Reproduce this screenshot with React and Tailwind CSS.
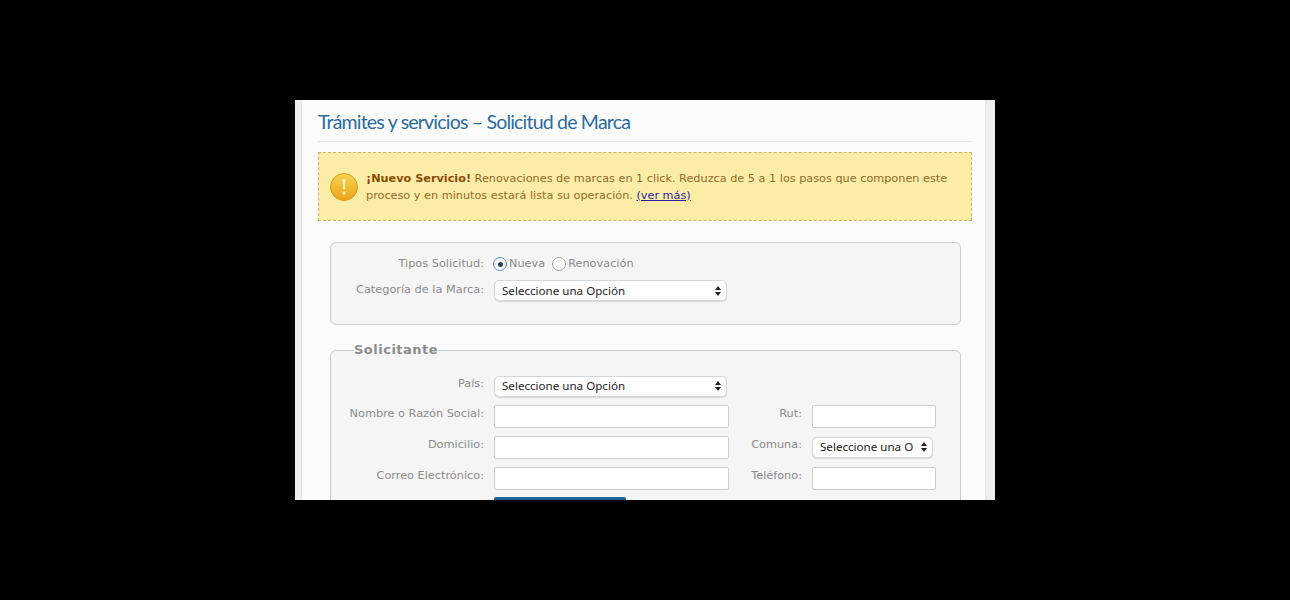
function Sel({ text, w }) {
  return (
    <div className={`${w} h-[21px] shrink-0 flex items-center justify-between bg-white border border-[#d4d8d8] rounded-[5px] pl-[7px] pr-[5px] text-[11.6px] text-[#222] font-['Noto_Sans',sans-serif] shadow-[0_1px_1px_rgba(0,0,0,0.12)]`}>
      <span className="whitespace-nowrap">{text}</span>
      <svg width="6" height="10" viewBox="0 0 6 10" className="shrink-0 ml-1"><path d="M3 0 6 4H0zM3 10 0 6h6z" fill="#222" /></svg>
    </div>
  );
}

function Inp({ w }) {
  return <div className={`${w} h-[23px] shrink-0 bg-white border border-[#c9d0ce] rounded-[2px]`} />;
}

function Label({ w, up, children }) {
  return <div className={`${w} ${up ? "pb-[4px]" : ""} shrink-0 text-right text-[11.3px] text-[#8b8b8b] whitespace-nowrap`}>{children}</div>;
}

function Radio({ on }) {
  return (
    <span className={`w-[14px] h-[14px] rounded-full bg-white border flex items-center justify-center ${on ? "border-[#5b8fc4]" : "border-[#a5a5a5]"}`}>
      {on && <span className="w-[5px] h-[5px] rounded-full bg-[#26425f]" />}
    </span>
  );
}

export default function App() {
  return (
    <div className="w-[1290px] h-[600px] bg-black pt-[100px] overflow-hidden font-['DejaVu_Sans',sans-serif]">
      <div className="ml-[295px] w-[700px] h-[400px] overflow-hidden bg-[#fcfcfc] flex">
        <div className="w-[7px] bg-[#efefef] border-r border-[#e2e2e2] shrink-0" />
        <div className="w-[683px] shrink-0 pl-[16px] pr-[13px]">
          <div className="h-[42px] border-b border-[#e6e8e8] flex items-center">
            <h1 className="text-[19.5px] tracking-[-0.8px] text-[#2a6ca0] font-['Lato',sans-serif] whitespace-nowrap pt-[2px]">Trámites y servicios – Solicitud de Marca</h1>
          </div>
          <div className="mt-[10px] h-[69px] bg-[#fceda6] border border-dashed border-[#c9b573] flex items-center pl-[11px]">
            <svg width="28" height="34" viewBox="0 0 28 34" className="shrink-0">
              <defs>
                <linearGradient id="warn" x1="0" y1="0" x2="0" y2="1">
                  <stop offset="0" stopColor="#f8d34e" />
                  <stop offset="1" stopColor="#eda31b" />
                </linearGradient>
              </defs>
              <circle cx="14" cy="17" r="13.5" fill="url(#warn)" stroke="#d99a1c" />
              <path d="M12.4 9h3.2l-.7 10.5h-1.8z" fill="#fdf0c0" />
              <circle cx="14" cy="23" r="1.7" fill="#fdf0c0" />
            </svg>
            <p className="ml-[8px] text-[11.25px] leading-[17px] text-[#93692a] whitespace-nowrap">
              <b className="text-[#8a4b08]">¡Nuevo Servicio!</b> Renovaciones de marcas en 1 click. Reduzca de 5 a 1 los pasos que componen este
              <br />
              proceso y en minutos estará lista su operación. <a className="text-[#2a1fa8] underline">(ver más)</a>
            </p>
          </div>
          <div className="mx-[12px] mt-[21px] h-[83px] w-[631px] bg-[#f5f5f5] border border-[#c9cdcd] rounded-[6px] pt-[11px]">
            <div className="flex items-center h-[20px]">
              <Label w="w-[153px]">Tipos Solicitud:</Label>
              <div className="ml-[9px] flex items-center text-[11.3px] text-[#8b8b8b]">
                <Radio on />
                <span className="ml-[2px]">Nueva</span>
                <span className="ml-[7px]"><Radio /></span>
                <span className="ml-[2px]">Renovación</span>
              </div>
            </div>
            <div className="flex items-center mt-[6px] h-[21px]">
              <Label w="w-[153px]">Categoría de la Marca:</Label>
              <div className="ml-[10px]"><Sel text="Seleccione una Opción" w="w-[233px]" /></div>
            </div>
          </div>
          <fieldset className="mx-[12px] mt-[15px] w-[631px] h-[200px] bg-[#f5f5f5] border border-[#c9cdcd] rounded-[6px] pt-[14px]">
            <legend className="ml-[23px] text-[13px] font-bold text-[#8d8d8d] tracking-[0.5px] pb-[2px]">Solicitante</legend>
            <div className="flex items-center h-[21px]">
              <Label w="w-[153px]" up>País:</Label>
              <div className="ml-[10px]"><Sel text="Seleccione una Opción" w="w-[233px]" /></div>
            </div>
            <div className="flex items-center mt-[8px]">
              <Label w="w-[153px]" up>Nombre o Razón Social:</Label>
              <div className="ml-[10px]"><Inp w="w-[235px]" /></div>
              <Label w="w-[73px]" up>Rut:</Label>
              <div className="ml-[10px]"><Inp w="w-[124px]" /></div>
            </div>
            <div className="flex items-center mt-[8px]">
              <Label w="w-[153px]" up>Domicilio:</Label>
              <div className="ml-[10px]"><Inp w="w-[235px]" /></div>
              <Label w="w-[73px]" up>Comuna:</Label>
              <div className="ml-[10px]"><Sel text="Seleccione una O" w="w-[121px]" /></div>
            </div>
            <div className="flex items-center mt-[8px]">
              <Label w="w-[153px]" up>Correo Electrónico:</Label>
              <div className="ml-[10px]"><Inp w="w-[235px]" /></div>
              <Label w="w-[73px]" up>Teléfono:</Label>
              <div className="ml-[10px]"><Inp w="w-[124px]" /></div>
            </div>
            <div className="ml-[163px] mt-[7px] w-[132px] h-[24px] bg-[#1a6496] rounded-t-[2px]" />
          </fieldset>
        </div>
        <div className="w-[10px] bg-[#efefef] border-l border-[#e2e2e2] shrink-0" />
      </div>
    </div>
  );
}
